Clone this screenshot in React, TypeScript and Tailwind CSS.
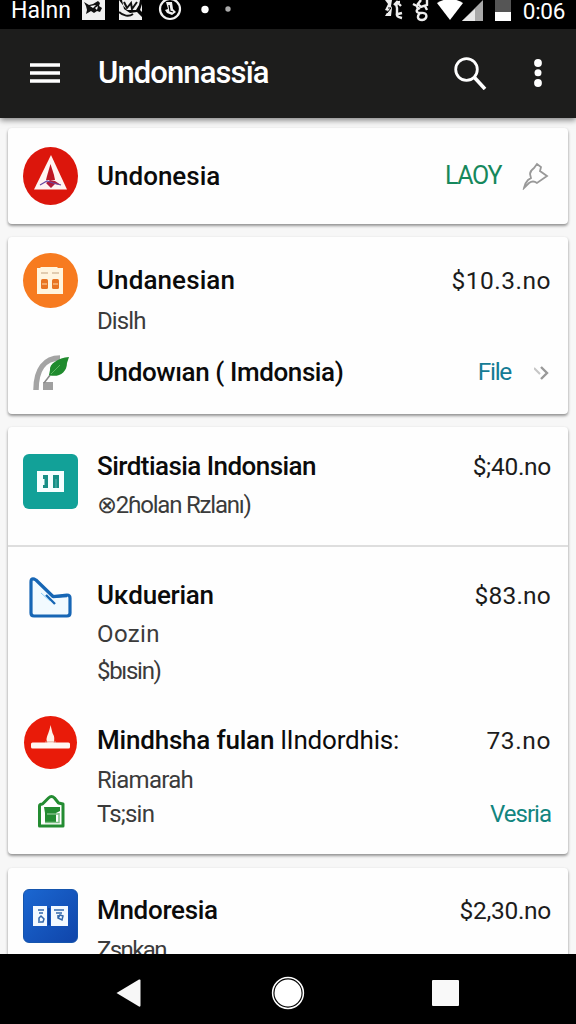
import type { ReactNode } from "react";

const title = "whitespace-pre text-[26px] font-medium leading-[36px] text-[#0b0b0b]";
const sub = "whitespace-pre text-[24px] leading-[36px] text-[#3b3b3b]";
const price = "ml-auto h-[36px] whitespace-pre text-[24.5px] leading-[38px] text-[#1c1c1c]";

function Card({ children, className = "" }: { children: ReactNode; className?: string }) {
  return (
    <section
      className={`mx-2 shrink-0 rounded-[4px] bg-[#fefefe] shadow-[0_2px_3px_rgba(0,0,0,0.34),0_1px_3px_rgba(0,0,0,0.12)] ${className}`}
    >
      {children}
    </section>
  );
}

function Row({ icon, children, className = "" }: { icon: ReactNode; children: ReactNode; className?: string }) {
  return (
    <div className={`flex pr-[17px] ${className}`}>
      <div className="flex w-[89px] shrink-0 justify-start">{icon}</div>
      <div className="min-w-0 flex-1">{children}</div>
    </div>
  );
}

const StatusBar = () => (
  <div className="flex h-[29px] shrink-0 items-start bg-black pl-[11px] text-white">
    <span className="-mt-[3px] w-[71px] shrink-0 text-[23px] leading-[28px]">Halnn</span>
    <svg className="h-5 w-[24px] shrink-0" viewBox="0 0 24 20">
      <path d="M0 0h23v20H0z" fill="#f1f1f1" />
      <path d="m2 2 5 3 4-1 5-3 2 2-1 3 3 2-2 4-3-1-3 2-3-2-5 3 1-4-1-4z" fill="#111" />
      <path d="m8 6 6-1-3 3zM13 8l3-2-1 4z" fill="#fff" />
    </svg>
    <svg className="ml-[13px] h-5 w-[24px] shrink-0" viewBox="0 0 24 20">
      <path d="M0 0h23v20H0z" fill="#f1f1f1" />
      <path d="M0 0h3l2 9 6 4 7-1 5 5v3-8l-2-2 2-6V0h-2l-1 5-3 5H8L3 4z" fill="#080808" />
      <path d="m5 2 3 6 4-5 1 6 5-7M0 12c4 4 10 5 14 2" fill="none" stroke="#111" strokeWidth="2" />
    </svg>
    <svg className="ml-[15px] h-[21px] w-[24px] shrink-0" viewBox="0 0 24 21">
      <circle cx="12" cy="9" r="10" fill="none" stroke="#f2f2f2" strokeWidth="2.2" />
      <path d="M8 2h6l1 7 3 3-4 3-5-2-2-3 3-1z" fill="#f2f2f2" />
      <path d="m11 5 1 6 3 1" fill="none" stroke="#000" strokeWidth="1.3" />
    </svg>
    <svg className="ml-[17px] h-5 w-[36px] shrink-0" viewBox="0 0 36 20">
      <circle cx="6" cy="9.500" r="3.700" fill="#fff" />
      <circle cx="29" cy="9" r="2.700" fill="#aaa" />
    </svg>
    <svg className="ml-auto h-[22px] w-[50px] shrink-0" viewBox="0 0 50 22">
      <path d="M2 0h7l-1 6 1 2-1 8H2l3-5-3-1 3-6z" fill="#eee" />
      <path d="M5 8h3M4 13l4-5" stroke="#000" strokeWidth="1" />
      <g fill="none" stroke="#eee" strokeWidth="2.4">
        <path d="M17 2c-4 0-4 4-3 6v4c-1 5 1 5 5 6M11 5l3-3 4 4M15 14l4-1" />
        <path d="m30 4 4 2 1 4M38 0l-3 4 3 3 6-2V0M37 8c-5 2-4 5 1 5 7-1 7 6 1 7-5 0-5-4-2-7M42 6l2 4" />
      </g>
    </svg>
    <svg className="mr-[9px] ml-[4px] h-[22px] w-[77px] shrink-0" viewBox="0 0 77 22">
      <path d="M0 3Q13-5 26 3L13 20z" fill="#fff" />
      <path d="M25 21 46 0v21z" fill="#a9a9a9" />
      <path d="m25 21 13-12v12z" fill="#e8e8e8" />
      <path d="M58 0h16v12H58z" fill="#555" />
      <path d="M58 12h16v9H58z" fill="#fff" />
    </svg>
    <span className="-mt-[3px] mr-[11px] shrink-0 whitespace-nowrap text-[22.5px] leading-[28px] tracking-[-0.3px]">0:06</span>
  </div>
);

const AppBar = () => (
  <header className="z-10 flex h-[89px] shrink-0 items-center bg-[#1d1d1c] pb-[2px] text-white shadow-[0_2px_6px_rgba(0,0,0,0.5)]">
    <svg className="ml-[30px] h-[22px] w-[30px]" viewBox="0 0 30 22">
      <path d="M0 3h30M0 11h30M0 19h30" stroke="#fff" strokeWidth="3.600" />
    </svg>
    <h1 className="ml-[38px] whitespace-nowrap text-[31px] font-medium leading-[40px] tracking-[-0.9px]">Undonnassïa</h1>
    <svg className="ml-auto h-[34px] w-[34px]" viewBox="0 0 34 34">
      <circle cx="13.500" cy="13.500" r="10.800" fill="none" stroke="#fff" strokeWidth="2.800" />
      <path d="m21 21 11 12" stroke="#fff" strokeWidth="3.600" />
    </svg>
    <svg className="mr-[33px] ml-[46px] h-[30px] w-[10px]" viewBox="0 0 10 30">
      <g fill="#fff">
        <circle cx="5" cy="5" r="3.900" />
        <circle cx="5" cy="14.800" r="3.500" />
        <circle cx="5" cy="25" r="3.900" />
      </g>
    </svg>
  </header>
);

const TriangleBadge = () => (
  <svg className="ml-[14px] h-[60px] w-[57px]" viewBox="0 0 57 60">
    <ellipse cx="28.500" cy="30" rx="27.500" ry="29" fill="#dc160c" />
    <path d="M29 9 45 43.500H12z" fill="#fff4f2" />
    <path d="m28.500 18-3.500 12-1 4h9l-1-5z" fill="#bd1522" />
    <path d="m28 34-4 3 5 5 4-4 6 1-6-4z" fill="#b01a3a" />
    <path d="m18 39 7-4 6 2 8 2" fill="none" stroke="#6a4ba1" strokeWidth="1.200" />
  </svg>
);

const BuildingBadge = () => (
  <svg className="ml-[14px] h-[57px] w-[57px]" viewBox="0 0 57 57">
    <circle cx="28.500" cy="28.500" r="27.500" fill="#f77b20" />
    <path d="M15 16h3l1-1h16l1 1h5v26H15z" fill="#fff5df" />
    <path d="M19 21h7M30 21h7" stroke="#d8bfa0" strokeWidth="1.600" />
    <g fill="#e87523">
      <rect x="19" y="27" width="7" height="10" rx="1.500" />
      <rect x="30" y="27" width="7" height="10" rx="1.500" />
    </g>
    <path d="M20 32h5M31 32h5" stroke="#ffdca9" strokeWidth="1.200" />
  </svg>
);

const LeafIcon = () => (
  <svg className="mt-[1px] ml-[25px] h-[36px] w-[38px]" viewBox="0 0 38 36">
    <path d="M3 35C3 14 12 3 27 3" fill="none" stroke="#a4a4a4" strokeWidth="5.500" />
    <path d="M10 27h10v8H10z" fill="#a0a0a0" />
    <path d="m11 28 10-13" stroke="#888" strokeWidth="1.500" />
    <path d="M36 2C25 3 16 9 17 15l-1 5c9 3 18-2 18-12z" fill="#208b2e" />
    <path d="m18 19 9-9" stroke="#5cb761" />
  </svg>
);

const TealTile = () => (
  <div className="ml-[15px] flex h-[55px] w-[55px] items-center justify-center rounded-[6px] bg-[#12a198]">
    <svg className="h-[21px] w-[27px]" viewBox="0 0 27 21">
      <path d="M0 0h27v21H0z" fill="#f5ffff" />
      <path d="M6 4h5v13H6v-3h1.500V8H6zM16 4h6v13h-6z" fill="#168f86" />
      <path d="M19 8v9" stroke="#57b6ae" />
    </svg>
  </div>
);

const ChartIcon = () => (
  <svg className="ml-[21px] h-[41px] w-[43px]" viewBox="0 0 43 41">
    <path d="M2 4q1-3 4-1l20 17 14-2v19q0 2-2 2H4q-2 0-2-2z" fill="#f2faff" />
    <path d="M24 19.500 7 3Q2 0 2 5v31q0 3 3 3h33q3 0 3-3V21q0-3-3-3z" fill="none" stroke="#1766b5" strokeWidth="3.200" strokeLinejoin="round" />
    <path d="m17 18 9 9M24 20l14-1" stroke="#1766b5" strokeWidth="2.400" />
    <path d="m12 16 9 8" stroke="#8acdf5" />
  </svg>
);

const CandleBadge = () => (
  <svg className="ml-[15px] h-[55px] w-[55px]" viewBox="0 0 55 55">
    <circle cx="27.500" cy="27.500" r="26.500" fill="#e91b09" />
    <path d="M27.500 10c-1 7-4 11-4 15l1 3h6q2-5-1-10z" fill="#fff1e8" />
    <path d="M22 27h11" stroke="#dd9585" />
    <rect x="8" y="27.500" width="39" height="6" rx="1.500" fill="#fff7f3" />
  </svg>
);

const TagIcon = () => (
  <svg className="ml-[29px] h-[35px] w-[28px]" viewBox="0 0 28 35">
    <path d="M2.500 12q0-2 3-2l6-6q3-3 6 0l4 5 4.500 1v22H2.500z" fill="#fff" stroke="#248c32" strokeWidth="3" strokeLinejoin="round" />
    <path d="M7 13h16v4l-4 2v10H8V19z" fill="#248c32" />
    <path d="M10 20h12M8 28.500h14V19" fill="none" stroke="#7fbf86" strokeWidth="1.500" />
  </svg>
);

const BlueTile = () => (
  <div className="ml-[15px] flex h-[54px] w-[55px] items-center justify-center rounded-[6px] border border-[#1555ad] bg-linear-to-br from-[#1b67d1] to-[#1045aa]">
    <svg className="h-5 w-[35px]" viewBox="0 0 35 20">
      <path d="M0 0h14v20H0zM18 0h17v20H18z" fill="#f3f9ff" />
      <path d="M16 2v17" stroke="#0b3d93" strokeWidth="1.600" />
      <path d="M5 4h6M6 7h4M6 15v-3l2-2 3 3-1 3H5M21 4h10M23 7h6M25 9v3l4 2 1-4-3-1-2 3" fill="none" stroke="#3267aa" strokeWidth="1.500" />
    </svg>
  </div>
);

const NavBar = () => (
  <nav className="z-10 flex h-[70px] shrink-0 items-center bg-black pt-2">
    <svg className="ml-[116px] h-[30px] w-[25px]" viewBox="0 0 25 30">
      <path d="M.5 15 23 1.500q1.500-.5 1.500 1v25q0 1.500-1.500 1z" fill="#f7f7f7" />
    </svg>
    <svg className="ml-[130px] h-[34px] w-[34px]" viewBox="0 0 34 34">
      <circle cx="17" cy="17" r="15.400" fill="none" stroke="#fff" strokeWidth="1.500" />
      <circle cx="17" cy="17" r="13.500" fill="#fff" />
    </svg>
    <div className="ml-[127px] h-[26px] w-[27px] rounded-[1px] bg-[#f9f9f9]" />
  </nav>
);

export default function App() {
  return (
    <div className="flex h-[1024px] w-[576px] flex-col overflow-hidden bg-[#f7f7f7] font-['Roboto','Liberation_Sans',sans-serif]">
      <StatusBar />
      <AppBar />
      <main className="flex min-h-0 flex-1 flex-col gap-[13px] overflow-hidden pt-[10px]">
        <Card className="h-[96px]">
          <Row className="h-full items-center pb-[1px]" icon={<TriangleBadge />}>
            <div className="flex items-center">
              <span className={title}>Undonesia</span>
              <span className="ml-auto text-[25px] leading-[36px] tracking-[-1.4px] text-[#16885c]">LAOY</span>
              <svg className="ml-[21px] mr-[2px] h-[28px] w-[27px]" viewBox="0 0 27 28">
                <path d="M2 26q1-5 4-8l3-2-1-4q0-3 4-6l3-4 4 3-1 4 7 5-10 7q-4-3-8 0z" fill="none" stroke="#999" strokeWidth="1.800" />
              </svg>
            </div>
          </Row>
        </Card>
        <Card className="h-[177px] pt-[15px]">
          <Row className="h-[102px]" icon={<BuildingBadge />}>
            <div className="flex pt-[10px]">
              <span className={`${title} tracking-[0.1px]`}>Undanesian</span>
              <span className={`${price} tracking-[0.5px]`}>$10.3.no</span>
            </div>
            <div className={`${sub} mt-[5px] tracking-[-0.9px]`}>Dislh</div>
          </Row>
          <Row icon={<LeafIcon />}>
            <div className="flex items-center">
              <span className={`${title} tracking-[-0.4px]`}>Undowıan ( Imdonsia)</span>
              <span className="ml-auto text-[24.5px] leading-[36px] tracking-[-1.3px] text-[#147b95]">File</span>
              <svg className="mr-[1px] ml-[23px] mt-[1px] h-4 w-4" viewBox="0 0 16 16">
                <path d="m0 3 6 6" stroke="#c6c6c6" strokeWidth="2" />
                <path d="m7 2 6 6-6 6" fill="none" stroke="#999" strokeWidth="2.400" />
              </svg>
            </div>
          </Row>
        </Card>
        <Card className="h-[427px]">
          <Row className="h-[120px] border-b-2 border-[#dedede] pt-[21px]" icon={<div className="pt-[6px]"><TealTile /></div>}>
            <div className="flex">
              <span className={`${title} tracking-[-0.55px]`}>Sirdtiasia Indonsian</span>
              <span className={`${price} tracking-[-0.3px]`}>$;40.no</span>
            </div>
            <div className={`${sub} mt-[3px] tracking-[-1.2px]`}>⊗2ɦolan Rzlanı)</div>
          </Row>
          <Row className="h-[168px] pt-[30px]" icon={<ChartIcon />}>
            <div className="flex">
              <span className={`${title} tracking-[-0.3px]`}>Uĸduerian</span>
              <span className={`${price} tracking-[0.2px]`}>$83.no</span>
            </div>
            <div className={`${sub} mt-[3px] tracking-[0.4px]`}>Oozin</div>
            <div className={`${sub} mt-[1px] tracking-[-1.3px]`}>$bısin)</div>
          </Row>
          <Row icon={<div className="flex flex-col gap-[24px]"><CandleBadge /><TagIcon /></div>}>
            <div className="flex pt-[7px]">
              <span className={`${title} tracking-[-0.2px]`}>Mindhsha fulan <span className="font-normal">lIndordhis:</span></span>
              <span className={`${price} tracking-[0.6px]`}>73.no</span>
            </div>
            <div className={`${sub} mt-[4px] tracking-[-0.7px]`}>Riamarah</div>
            <div className="-mt-[2px] flex">
              <span className={`${sub} tracking-[-0.8px]`}>Ts;sin</span>
              <span className="ml-auto text-[24px] leading-[36px] tracking-[-1px] text-[#12857f]">Vesria</span>
            </div>
          </Row>
        </Card>
        <Card className="mt-[1px] h-[120px]">
          <Row className="pt-[21px]" icon={<BlueTile />}>
            <div className="flex pt-[3px]">
              <span className={`${title} tracking-[-0.3px]`}>Mndoresia</span>
              <span className={`${price} tracking-[-0.3px]`}>$2,30.no</span>
            </div>
            <div className={`${sub} mt-[4px] tracking-[-1.6px]`}>Zsnkan</div>
          </Row>
        </Card>
      </main>
      <NavBar />
    </div>
  );
}
